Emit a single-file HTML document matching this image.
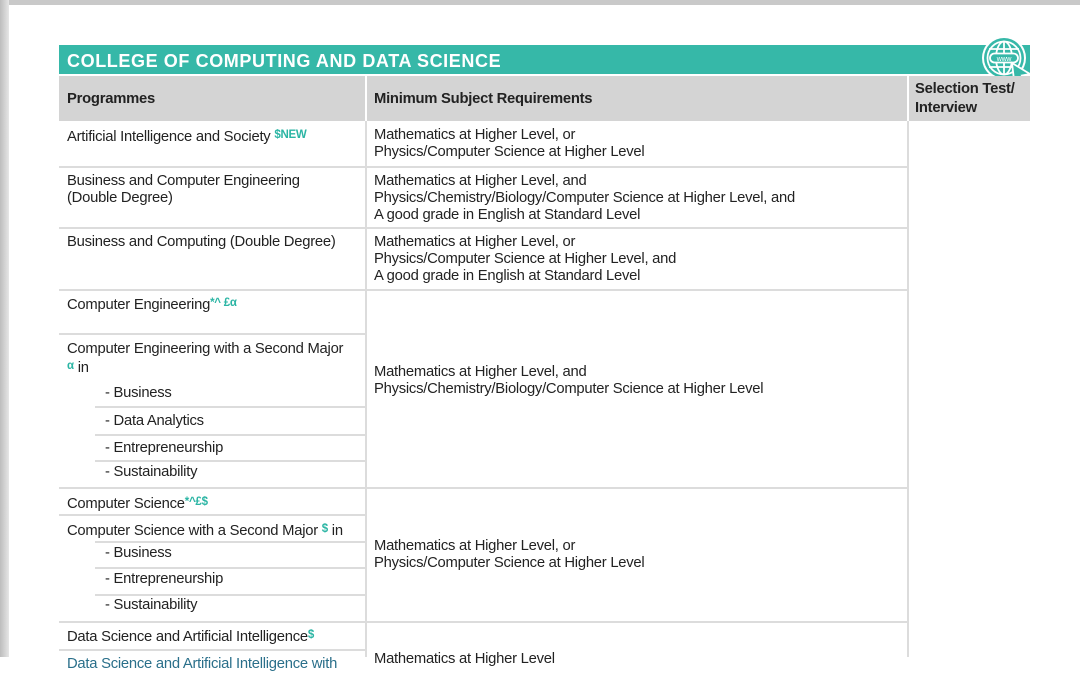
<!DOCTYPE html>
<html><head><meta charset="utf-8"><style>
*{margin:0;padding:0;box-sizing:border-box}
body{width:1080px;height:657px;overflow:hidden;background:#fff;position:relative;font-family:"Liberation Sans",sans-serif;color:#222;font-size:14.8px;letter-spacing:-0.25px}
.a{position:absolute;line-height:17px;white-space:nowrap}
.h{position:absolute;background:#dcdcdc;height:2px}
.v{position:absolute;background:#dcdcdc;width:2px}
.t{color:#2bb5a4;font-weight:bold;font-size:11.5px;vertical-align:3px}
.b{font-weight:bold}
</style></head><body>
<div style="position:absolute;left:0;top:0;width:1080px;height:5px;background:#c9c9c9"></div>
<div style="position:absolute;left:0;top:0;width:9px;height:657px;background:linear-gradient(90deg,#bdbdbd,#e6e6e6)"></div>
<div style="position:absolute;left:59px;top:45px;width:971px;height:29px;background:#36b8a8"></div>
<div class="a b" style="left:67px;top:50px;color:#fff;font-size:18px;line-height:22px;letter-spacing:0.6px">COLLEGE OF COMPUTING AND DATA SCIENCE</div>
<svg style="position:absolute;left:980px;top:34px" width="54" height="56" viewBox="0 0 54 56">
<circle cx="24" cy="24" r="22" fill="#fff"/>
<circle cx="24" cy="24" r="20" fill="#36b8a8"/>
<g fill="none" stroke="#fff" stroke-width="1.8">
<circle cx="24" cy="24" r="16.5"/>
<ellipse cx="24" cy="24" rx="8" ry="16.5"/>
<line x1="24" y1="7.5" x2="24" y2="40.5"/>
<line x1="9" y1="15" x2="39" y2="15"/>
<line x1="9" y1="33" x2="39" y2="33"/>
<rect x="10" y="19.5" width="28" height="9" rx="4.5" fill="#36b8a8"/>
</g>
<text x="24" y="26.8" font-size="7" fill="#fff" text-anchor="middle" font-family="Liberation Sans">www</text>
<path d="M32 29 L50 40 L42 41.5 L48 49 L44.5 51.5 L39 44 L34.5 50 Z" fill="#36b8a8" stroke="#fff" stroke-width="1.8"/>
</svg>
<div style="position:absolute;left:59px;top:76px;width:306px;height:45px;background:#d4d4d4"></div>
<div style="position:absolute;left:367px;top:76px;width:540px;height:45px;background:#d4d4d4"></div>
<div style="position:absolute;left:909px;top:76px;width:121px;height:45px;background:#d4d4d4"></div>
<div class="a b" style="left:67px;top:91px">Programmes</div>
<div class="a b" style="left:374px;top:91px">Minimum Subject Requirements</div>
<div class="a b" style="left:915px;top:80px;line-height:19px">Selection Test/<br>Interview</div>
<div class="v" style="left:365px;top:121px;height:536px"></div>
<div class="v" style="left:907px;top:121px;height:536px"></div>
<div class="h" style="left:59px;top:166px;width:848px"></div>
<div class="h" style="left:59px;top:227px;width:848px"></div>
<div class="h" style="left:59px;top:289px;width:848px"></div>
<div class="h" style="left:59px;top:333px;width:306px"></div>
<div class="h" style="left:95px;top:406px;width:270px"></div>
<div class="h" style="left:95px;top:434px;width:270px"></div>
<div class="h" style="left:95px;top:460px;width:270px"></div>
<div class="h" style="left:59px;top:487px;width:848px"></div>
<div class="h" style="left:59px;top:514px;width:306px"></div>
<div class="h" style="left:95px;top:541px;width:270px"></div>
<div class="h" style="left:95px;top:567px;width:270px"></div>
<div class="h" style="left:95px;top:594px;width:270px"></div>
<div class="h" style="left:59px;top:621px;width:848px"></div>
<div class="h" style="left:59px;top:649px;width:306px"></div>
<div class="a" style="left:67px;top:127px">Artificial Intelligence and Society <span class="t">$NEW</span></div>
<div class="a" style="left:374px;top:127px">Mathematics at Higher Level, or<br>Physics/Computer Science at Higher Level</div>
<div class="a" style="left:67px;top:173px">Business and Computer Engineering<br>(Double Degree)</div>
<div class="a" style="left:374px;top:173px">Mathematics at Higher Level, and<br>Physics/Chemistry/Biology/Computer Science at Higher Level, and<br>A good grade in English at Standard Level</div>
<div class="a" style="left:67px;top:234px">Business and Computing (Double Degree)</div>
<div class="a" style="left:374px;top:234px">Mathematics at Higher Level, or<br>Physics/Computer Science at Higher Level, and<br>A good grade in English at Standard Level</div>
<div class="a" style="left:67px;top:295px">Computer Engineering<span class="t">*^ £α</span></div>
<div class="a" style="left:67px;top:341px">Computer Engineering with a Second Major<br><span class="t">α</span> in</div>
<div class="a" style="left:105px;top:385px">- Business</div>
<div class="a" style="left:105px;top:413px">- Data Analytics</div>
<div class="a" style="left:105px;top:440px">- Entrepreneurship</div>
<div class="a" style="left:105px;top:464px">- Sustainability</div>
<div class="a" style="left:374px;top:364px">Mathematics at Higher Level, and<br>Physics/Chemistry/Biology/Computer Science at Higher Level</div>
<div class="a" style="left:67px;top:494px">Computer Science<span class="t">*^£$</span></div>
<div class="a" style="left:67px;top:521px">Computer Science with a Second Major <span class="t">$</span> in</div>
<div class="a" style="left:105px;top:545px">- Business</div>
<div class="a" style="left:105px;top:571px">- Entrepreneurship</div>
<div class="a" style="left:105px;top:597px">- Sustainability</div>
<div class="a" style="left:374px;top:538px">Mathematics at Higher Level, or<br>Physics/Computer Science at Higher Level</div>
<div class="a" style="left:67px;top:627px">Data Science and Artificial Intelligence<span class="t">$</span></div>
<div class="a" style="left:67px;top:656px;color:#2a6f8a">Data Science and Artificial Intelligence with</div>
<div class="a" style="left:374px;top:651px">Mathematics at Higher Level</div>
</body></html>
